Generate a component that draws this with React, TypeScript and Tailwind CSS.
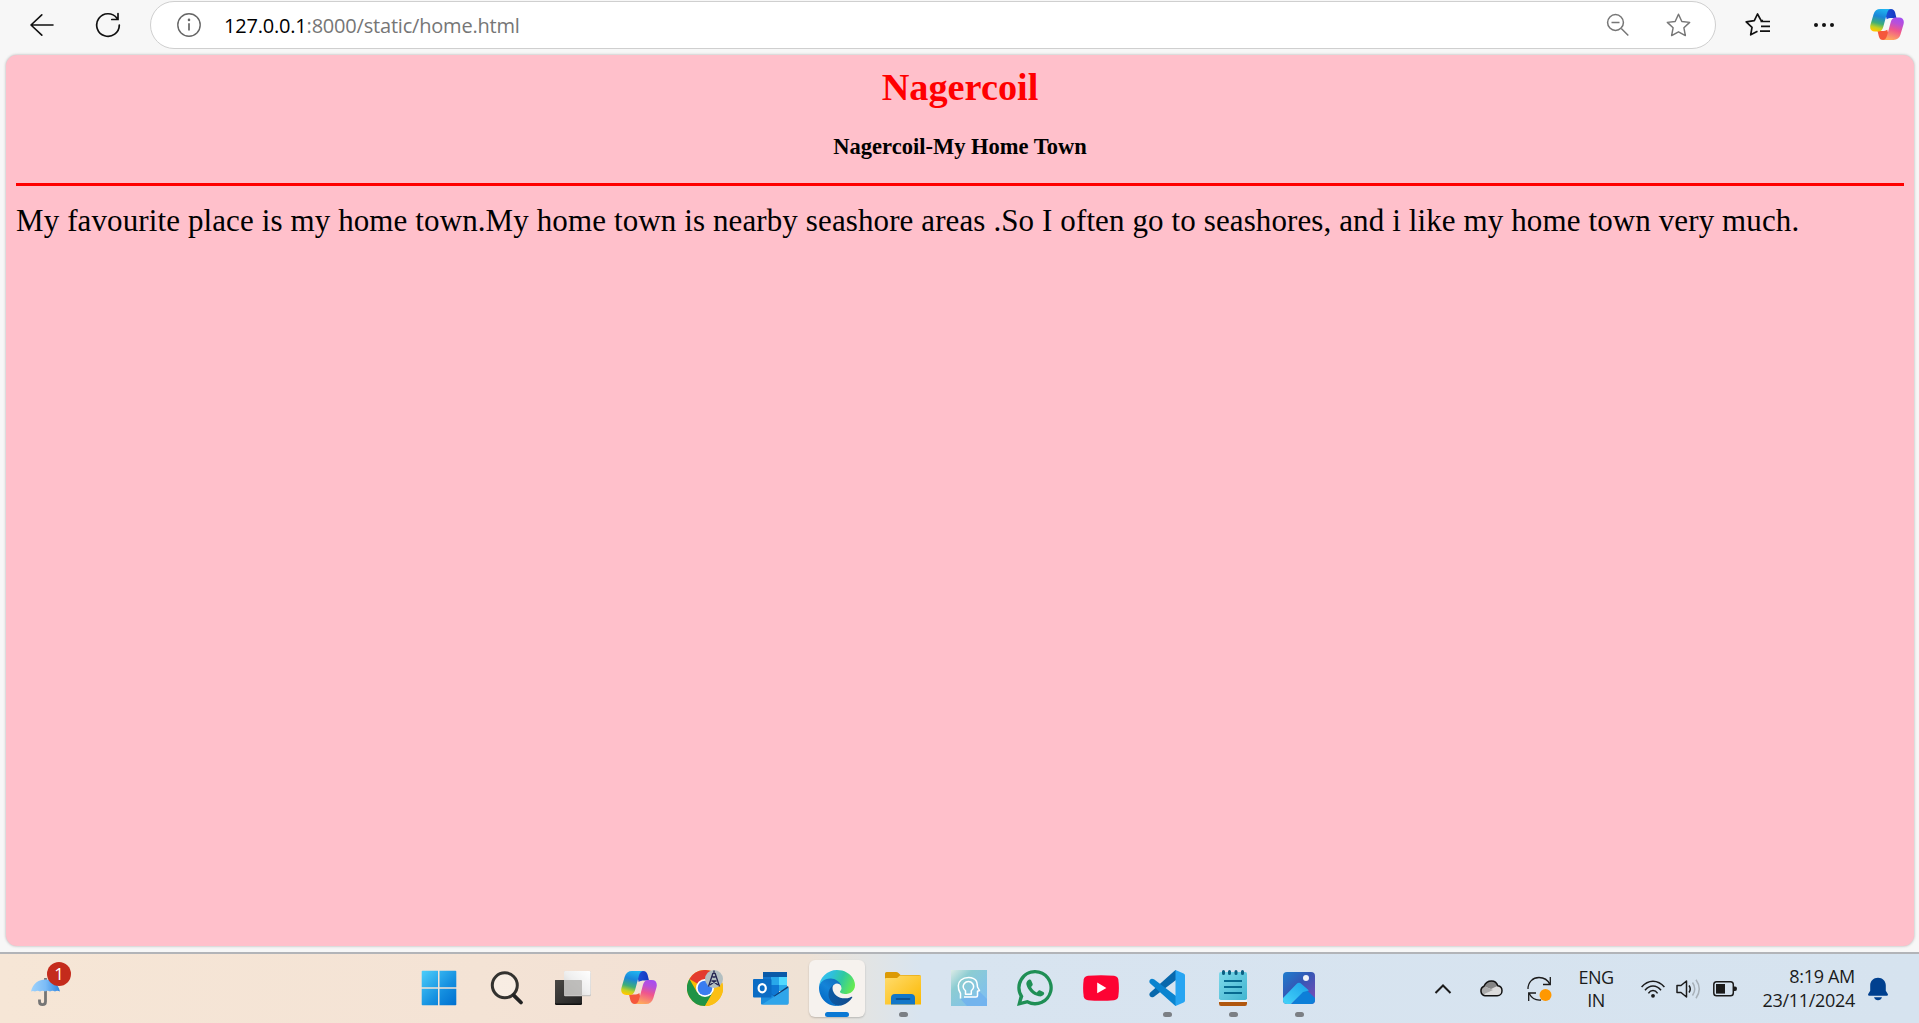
import { type ReactNode } from 'react';

function CopilotIcon({ id, className }: { id: string; className: string }) {
  const fold = 'M17.500 0h4.700c2.400 0 3.700 1.400 4.400 3.800L28 9.500h-4.500c-3 0-4.500.5-5.800 1.500L16.500 6z';
  const ribbon =
    'M11 0h12c-2.800 0-4.200 1.600-5 4.600l-4 14.600c-.9 3.200-2.500 4.800-5.400 4.800H5.200C1.200 24-.6 21 .5 16.800l3.200-11C4.900 1.900 7.300 0 11 0z';
  return (
    <svg viewBox="0 0 36 33" className={className} preserveAspectRatio="none">
      <defs>
        <linearGradient id={id + 'a'} x1=".6" y1="0" x2=".35" y2="1">
          <stop offset="0" stopColor="#1fb4f0" />
          <stop offset=".35" stopColor="#1a86d8" />
          <stop offset=".65" stopColor="#3fae78" />
          <stop offset=".85" stopColor="#c3d022" />
          <stop offset="1" stopColor="#ffc800" />
        </linearGradient>
        <linearGradient id={id + 'b'} x1=".3" y1="1" x2=".6" y2="0">
          <stop offset="0" stopColor="#a64df0" />
          <stop offset=".25" stopColor="#b950d8" />
          <stop offset=".55" stopColor="#f0568c" />
          <stop offset="1" stopColor="#ffa95c" />
        </linearGradient>
        <linearGradient id={id + 'c'} x1="0" y1="0" x2="1" y2="0">
          <stop offset="0" stopColor="#1e50d8" />
          <stop offset="1" stopColor="#1438c0" />
        </linearGradient>
      </defs>
      <path d={fold} fill={`url(#${id}c)`} />
      <path d={fold} fill="#f5573c" transform="rotate(180 18 16.500)" />
      <path d={ribbon} fill={`url(#${id}a)`} />
      <path d={ribbon} fill={`url(#${id}b)`} transform="rotate(180 18 16.500)" />
    </svg>
  );
}

function StartIcon() {
  return (
    <svg viewBox="0 0 36 36" className="size-9 -translate-x-[2px]">
      <defs>
        <linearGradient id="win" x1="0" y1="0" x2="35" y2="35" gradientUnits="userSpaceOnUse">
          <stop offset="0" stopColor="#4fd0fb" />
          <stop offset=".6" stopColor="#1590e0" />
          <stop offset="1" stopColor="#0070d0" />
        </linearGradient>
      </defs>
      <path
        fill="url(#win)"
        d="M1.500.700H17v16.500H.700V1.500q0-.8.8-.8zM18.500.700H34.500q.8 0 .8.800V17.200H18.500zM.7 18.700H17V35.300H1.500q-.8 0-.8-.8zM18.500 18.700H35.300V34.500q0 .8-.8.800H18.500z"
      />
    </svg>
  );
}

function SearchIcon() {
  return (
    <svg viewBox="0 0 36 36" className="size-9" fill="none" strokeLinecap="round">
      <circle cx="15.800" cy="15.300" r="12.500" fill="#fff" fillOpacity=".35" stroke="#33322f" strokeWidth="3" />
      <path d="M24.800 25.300 32 32.500" stroke="#222" strokeWidth="3.800" />
    </svg>
  );
}

function TaskViewIcon() {
  return (
    <svg viewBox="0 0 36 36" className="size-9">
      <defs>
        <linearGradient id="tvd" x1="0" y1="0" x2="1" y2="1">
          <stop offset="0" stopColor="#4a4845" />
          <stop offset="1" stopColor="#242424" />
        </linearGradient>
        <linearGradient id="tvl" x1="0" y1="1" x2="1" y2="0">
          <stop offset="0" stopColor="#cfcdcb" />
          <stop offset=".5" stopColor="#efefef" />
          <stop offset="1" stopColor="#fff" />
        </linearGradient>
      </defs>
      <rect x="0" y="10" width="27" height="25" rx="1.300" fill="#111" />
      <rect x="0" y="10" width="27" height="23.500" rx="1.300" fill="url(#tvd)" />
      <rect x="9" y="1.200" width="27" height="25" rx="1.300" fill="#c8c6c4" />
      <rect x="9" y="1" width="26.500" height="24" rx="1.300" fill="url(#tvl)" />
      <path d="M9 10h17q1 0 1 1v14H9z" fill="#b5b4b2" opacity=".85" />
    </svg>
  );
}

function ChromeIcon() {
  return (
    <svg viewBox="0 0 36 36" className="size-9">
      <circle cx="18" cy="18" r="18" fill="#fbbc04" />
      <path d="M18 18 2.400 9A18 18 0 0 1 33.600 9z" fill="#e33b2e" />
      <path d="M2.400 9A18 18 0 0 0 18 36l7.800-13.500L18 18 10.200 22.500z" fill="#1f9346" />
      <path d="M18 9H33.600A18 18 0 0 1 18 36l7.800-13.500z" fill="#fbbf14" />
      <circle cx="18" cy="18" r="9" fill="#fff" />
      <circle cx="18" cy="18" r="7.300" fill="#3b7df0" />
      <circle cx="27" cy="9" r="9" fill="#b3bfc1" />
      <path
        d="M26 3 21.500 16.500M28 3l4.500 13.500M27 .5V4M25.500 7h3M24.500 11h5M23 15l5.500-4M31 15l-5.500-4"
        stroke="#252451"
        strokeWidth="1.300"
        fill="none"
      />
    </svg>
  );
}

function OutlookIcon() {
  return (
    <svg viewBox="0 0 36 36" className="size-9">
      <path d="M10 2h24v6H10z" fill="#0a5aa8" />
      <path d="M10 7h8v9h-8z" fill="#1275cc" />
      <path d="M18 7h8v8h-8z" fill="#28a8ea" />
      <path d="M26 7h8v8h-8z" fill="#50d9ff" />
      <path d="M10 15h8v11h-8z" fill="#0a4c94" />
      <path d="M18 15h8v11h-8z" fill="#0f78d4" />
      <path d="M26 15h8v6h-8z" fill="#28a8ea" />
      <path d="M8 34V22l13 4 14.500-8.500V33q0 1.500-1.500 1.500H9.500Q8 34.500 8 34z" fill="#1a8cdc" />
      <path d="M35.500 17.500 9 34.500H34q1.500 0 1.500-1.500z" fill="#2fa5ea" />
      <path d="M16 22 21 25.800 35 16l.5 1.500L21.500 26.500z" fill="#123b70" />
      <rect x="0" y="9" width="18.500" height="18.500" rx="1" fill="#0b6cc4" />
      <ellipse cx="9.200" cy="18.200" rx="3.600" ry="4.100" fill="none" stroke="#fff" strokeWidth="2.200" />
    </svg>
  );
}

function EdgeIcon() {
  return (
    <svg viewBox="0 0 256 256" className="size-9">
      <defs>
        <linearGradient id="e1" x1=".1" x2="1" y1=".6" y2=".7">
          <stop offset="0" stopColor="#0c59a4" />
          <stop offset="1" stopColor="#114a8b" />
        </linearGradient>
        <linearGradient id="e2" x1=".8" x2=".3" y1=".2" y2="1">
          <stop offset="0" stopColor="#1273c4" />
          <stop offset=".4" stopColor="#1484d8" />
          <stop offset="1" stopColor="#0067c4" />
        </linearGradient>
        <linearGradient id="e3" x1="0" x2="1" y1=".3" y2=".6">
          <stop offset="0" stopColor="#35c1f1" />
          <stop offset=".3" stopColor="#2fc0dc" />
          <stop offset=".6" stopColor="#2fc9a0" />
          <stop offset="1" stopColor="#66eb4e" />
        </linearGradient>
      </defs>
      <path
        fill="url(#e1)"
        d="M231 190.500c-3.400 1.800-6.900 3.400-10.500 4.700a101.500 101.500 0 0 1-35.900 6.500c-47.300 0-88.500-32.500-88.500-74.300.1-11.400 6.400-21.900 16.400-27.300-42.800 1.800-53.800 46.400-53.800 72.500 0 73.900 68.100 81.400 82.800 81.400 7.900 0 19.800-2.300 27-4.600l1.300-.4c27.600-9.500 51-28.100 66.600-52.800 1.200-1.900.6-4.300-1.200-5.500-1.300-.8-2.900-.9-4.200-.2z"
      />
      <path
        fill="url(#e2)"
        d="M105.700 241.400c-8.900-5.500-16.600-12.800-22.700-21.300-26.300-36-18.400-86.500 17.600-112.800 3.800-2.700 7.700-5.200 11.900-7.200 3.100-1.500 8.400-4.100 15.500-4 10.100.1 19.600 4.900 25.700 13 4 5.400 6.300 11.900 6.400 18.700 0-.2 24.500-79.600-80-79.600-43.900 0-80 41.700-80 78.200-.2 19.300 4 38.500 12.100 56 27.600 58.800 94.800 87.600 156.400 67.100-21.100 6.600-44.100 3.700-62.900-8.100z"
      />
      <path
        fill="url(#e3)"
        d="M152.300 148.900c-.8 1-3.300 2.500-3.300 5.700 0 2.600 1.700 5.100 4.700 7.200 14.400 10 41.500 8.700 41.600 8.700 10.700 0 21.100-2.900 30.300-8.300 18.800-11 30.400-31.100 30.400-52.900.3-22.400-8-37.300-11.300-43.900C223.500 23.900 177.700 0 128 0 58 0 1 56.200 0 126.200c.5-36.500 36.800-66 80-66 3.500 0 23.500.3 42 10.100 16.300 8.600 24.900 18.900 30.800 29.200 6.200 10.700 7.300 24.100 7.300 29.500 0 5.300-2.700 13.300-7.800 19.900z"
      />
    </svg>
  );
}

function ExplorerIcon() {
  return (
    <svg viewBox="0 0 36 36" className="size-9">
      <defs>
        <linearGradient id="fold" x1="0" y1="0" x2="1" y2="1">
          <stop offset="0" stopColor="#ffdc6e" />
          <stop offset="1" stopColor="#fcb800" />
        </linearGradient>
      </defs>
      <path d="M0 3.500Q0 2 1.500 2H11q1.500 0 2.500 1l2 2H34q2 0 2 2v6H0z" fill="#dc9a06" />
      <path d="M0 9q0-1 1-1h11l3-2.500H35q1 0 1 1v28H0z" fill="url(#fold)" />
      <path d="M6 34.500V28q0-4 4-4h16q4 0 4 4v6.500z" fill="#1377c8" />
      <path d="M11.500 29h13" stroke="#0a4884" strokeWidth="1.600" strokeLinecap="round" />
    </svg>
  );
}

function HeadIcon() {
  return (
    <svg viewBox="0 0 36 36" className="size-9" fill="none">
      <defs>
        <linearGradient id="head" x1="0" y1="0" x2="1" y2="1">
          <stop offset="0" stopColor="#dcebe6" />
          <stop offset=".3" stopColor="#8cccd2" />
          <stop offset="1" stopColor="#7dbdf5" />
        </linearGradient>
      </defs>
      <path d="M0 0h36v36H0z" fill="url(#head)" />
      <path d="M9.500 29 27 26l1-5 8 8v7H16z" fill="#6fb0ee" opacity=".8" />
      <g stroke="#fff" strokeWidth="1.500" strokeLinejoin="round">
        <path d="M9.500 28.500v-5C6 18 7 12.500 10 10 14 6.500 22 6.500 25 10.500c1.500 2 1.200 4.500 1.500 6.500l2 3.500-2 .8v4.500q0 1.200-1.500 1.200H13" />
        <path d="M14.500 24.300v-3.500c-2.700-2.300-2.700-5.300-1.200-7.300 2-2.600 6.300-2.600 8.200 0 1.500 2 1.500 5-1.200 7.300v3.500z" />
      </g>
    </svg>
  );
}

function WhatsAppIcon() {
  return (
    <svg viewBox="0 0 36 36" className="size-9">
      <path
        fill="#1f8f55"
        fillRule="evenodd"
        d="M18.200 0a17.700 17.700 0 1 1-8.100 33.500L0 36l2.500-9.700A17.700 17.700 0 0 1 18.200 0zm.1 3.300A14.400 14.400 0 0 0 6 25.500l.4.700L4.600 31.400l5.800-1.500.7.400A14.400 14.400 0 1 0 18.300 3.300z"
      />
      <path
        fill="#1f8f55"
        d="M11.500 10c.9-.6 2.200-.6 2.700.5l1.400 3.200c.3.800 0 1.500-.5 2.100l-1 1.200c1.300 2.500 3.200 4.300 5.700 5.400l1.500-1.600c.6-.6 1.300-.7 2-.3l3 1.600c1.100.6 1.100 1.600.5 2.500-1 1.500-2.800 2.100-5.100 1.700-6.200-1.300-11-6-12.300-11.700-.4-2 .5-3.600 2.100-4.600z"
      />
    </svg>
  );
}

function YouTubeIcon() {
  return (
    <svg viewBox="0 0 36 36" className="size-9">
      <path
        fill="#fd0333"
        d="M5 5.800Q18 4.600 31 5.800 34.700 6.200 35.300 9.500 36.500 18 35.300 26.500 34.700 29.800 31 30.200 18 31.400 5 30.200 1.300 29.800.7 26.500-.5 18 .7 9.500 1.300 6.200 5 5.800z"
      />
      <path fill="#fff" d="M14.200 12.500v10.800l9.200-5.400z" />
    </svg>
  );
}

function VsCodeIcon() {
  return (
    <svg viewBox="0 0 36 36" className="size-9">
      <path d="M1 26.200Q-.3 24.500 1 22.700L25 1.200Q26.500 0 27 0V10L5 26.700Q2.500 28.200 1 26.200z" fill="#0868ac" />
      <path d="M1 9.800Q-.3 11.500 1 13.300L25 34.800Q26.500 36 27 36V26L5 9.300Q2.500 7.800 1 9.800z" fill="#0b84cf" />
      <path d="M26.500 0 34.600 3.500Q36 4.200 36 5.500v25q0 1.400-1.400 2L26.500 36z" fill="#27a5f2" />
    </svg>
  );
}

function NotepadIcon() {
  return (
    <svg viewBox="0 0 36 36" className="size-9">
      <defs>
        <linearGradient id="np" x1="0" y1="0" x2="1" y2="1">
          <stop offset="0" stopColor="#7ed9ea" />
          <stop offset="1" stopColor="#41b5d0" />
        </linearGradient>
      </defs>
      <path d="M4 28h28v5.500Q32 36 30 36H6q-2 0-2-2.500z" fill="#b0570e" />
      <path d="M4 28h28v4H4z" fill="#eef2f4" />
      <rect x="4" y="2" width="28" height="28" rx="1.800" fill="url(#np)" />
      <path d="M9 11h18M9 17h18M9 23h18" stroke="#076a90" strokeWidth="1.900" />
      <path d="M8.500 1.500v2M14.500 1.500v2M21 1.500v2M27.500 1.500v2" stroke="#0b5f82" strokeWidth="3" strokeLinecap="round" />
    </svg>
  );
}

function PhotosIcon() {
  return (
    <svg viewBox="0 0 36 36" className="size-9">
      <defs>
        <linearGradient id="ph" x1="0" y1="0" x2="1" y2="1">
          <stop offset="0" stopColor="#1b83d2" />
          <stop offset=".45" stopColor="#3457b5" />
          <stop offset="1" stopColor="#8e49b8" />
        </linearGradient>
        <linearGradient id="phm" x1="0" y1="1" x2="1" y2="0">
          <stop offset="0" stopColor="#49d8fb" />
          <stop offset="1" stopColor="#1aa0e8" />
        </linearGradient>
        <clipPath id="phc">
          <rect x="2" y="2" width="32" height="32" rx="4" />
        </clipPath>
      </defs>
      <g clipPath="url(#phc)">
        <path d="M0 0h36v36H0z" fill="url(#ph)" />
        <path d="M9 36 24 18.500l12 11.500v6z" fill="#0d7fd8" />
        <path d="M0 30 15.500 14q2.500-2.300 5 0L28 20.500 22 22 8 36H0z" fill="url(#phm)" />
        <circle cx="25" cy="8" r="3" fill="#f1f3f8" />
      </g>
    </svg>
  );
}

function TaskButton({ children, running, active }: { children: ReactNode; running?: boolean; active?: boolean }) {
  return (
    <div className="flex w-[66px] justify-center">
      <div
        className={
          active
            ? 'flex h-[57px] w-14 flex-col items-center rounded-md bg-[#f6f2ee] pt-[10px] shadow-[0_1px_2px_rgba(0,0,0,0.2)]'
            : 'flex h-[57px] w-14 flex-col items-center pt-[10px]'
        }
      >
        {children}
        {active && <div className="mt-[6px] h-[5px] w-6 rounded-full bg-[#0a78d4]" />}
        {running && <div className="mt-[6px] h-[5px] w-[9px] rounded-full bg-[#7b7f84]" />}
      </div>
    </div>
  );
}

const STAR = 'M12 1.200l3.200 6.900 7.500.9-5.500 5.200 1.400 7.500L12 18.100l-6.600 3.600 1.400-7.500L1.300 9l7.500-.9z';

function Toolbar() {
  return (
    <header className="flex h-[54px] shrink-0 items-start bg-[#f7f7f7]">
      <div className="flex h-[49px] w-[150px] items-center">
        <svg viewBox="0 0 24 24" className="ml-[30px] size-6" fill="none" stroke="#111" strokeWidth="1.600" strokeLinecap="round" strokeLinejoin="round">
          <path d="M23 12H1M11.800 1.800 1 12l10.800 10.200" />
        </svg>
        <svg viewBox="0 0 26 26" className="ml-[41px] size-[26px]" fill="none" stroke="#111" strokeWidth="1.700" strokeLinecap="round">
          <path d="M24.300 13A11.300 11.300 0 1 1 22 6.200M23 1.500v6h-6.200" />
        </svg>
      </div>
      <div className="mt-px flex h-12 w-[1566px] items-center rounded-full border border-[#cfcfcf] bg-white">
        <svg viewBox="0 0 24 24" className="ml-[26px] size-6" fill="none" stroke="#666" strokeWidth="1.400">
          <circle cx="12" cy="12" r="11.200" />
          <path d="M12 10.200v7.300" strokeWidth="1.700" />
          <circle cx="12" cy="6.900" r=".6" fill="#666" />
        </svg>
        <span className="ml-[23px] mt-px whitespace-nowrap font-['Open_Sans',sans-serif] text-[20px] leading-none tracking-[-0.2px] text-[#767676]">
          <span className="text-black">127.0.0.1</span>:8000/static/home.html
        </span>
        <svg viewBox="0 0 24 24" className="ml-auto size-6" fill="none" stroke="#767676" strokeWidth="1.500">
          <circle cx="9.500" cy="9.500" r="7.900" />
          <path d="m15.300 15.500 7 7M5.500 9.500h8" />
        </svg>
        <svg viewBox="0 0 24 24" className="ml-9 mr-6 size-[25px]" fill="none" stroke="#767676" strokeWidth="1.400" strokeLinejoin="round">
          <path d={STAR} />
        </svg>
      </div>
      <div className="flex h-[49px] items-center">
        <svg viewBox="0 0 25 24" className="ml-[29px] h-6 w-[25px]" fill="none" stroke="#111" strokeWidth="1.700" strokeLinejoin="round">
          <path d="M18 7.700 16 7.400 12.500 1 9.300 7.700 1.200 8.800 7 14.300 5.700 21.800 12.500 18.300M15.500 8.500H25M16 13.300h9M15 18.200h10" />
        </svg>
        <svg viewBox="0 0 22 6" className="ml-[43px] h-[6px] w-[22px]" fill="#111">
          <circle cx="3" cy="3" r="2" />
          <circle cx="11" cy="3" r="2" />
          <circle cx="19" cy="3" r="2" />
        </svg>
        <CopilotIcon id="cpt" className="ml-[35px] h-[31px] w-[34px]" />
      </div>
    </header>
  );
}

function Taskbar() {
  return (
    <footer className="flex h-[71px] shrink-0 border-t-2 border-[#b2b4b8] bg-[linear-gradient(90deg,#f6e6d6_0%,#f4e3d5_25%,#f2e1d5_36%,#efe2d5_42%,#e3e4e3_45%,#d8e4f0_48%,#d6e3ef_100%)]">
      <div className="w-[408px]">
        <div className="relative ml-[30px] mt-6 h-8 w-8">
          <svg viewBox="0 0 32 30" className="h-[30px] w-8">
            <defs>
              <linearGradient id="um" x1="0" y1="0" x2="1" y2="0">
                <stop offset="0" stopColor="#9fd2fb" />
                <stop offset=".5" stopColor="#7cbcf7" />
                <stop offset="1" stopColor="#2e86e0" />
              </linearGradient>
            </defs>
            <path d="M15.500 0v23.500q0 3.200-3 3.200t-3-3.200v-2" fill="none" stroke="#757575" strokeWidth="2.800" />
            <path d="M1 13.500C3 5 9 1.500 15.500 1.500S28 5 30 13.500q-3-1.500-5 0-2.500-1.500-5 0-2.500-1.500-5 0-2.500-1.500-5 0-2.500-1.500-5 0-2-1-4 0z" fill="url(#um)" />
          </svg>
          <span className="absolute -top-[16px] left-[17px] flex size-6 items-center justify-center rounded-full bg-[#c42b1c] font-['Open_Sans',sans-serif] text-[17px] text-white">
            1
          </span>
        </div>
      </div>
      <nav className="flex pt-[6px]">
        <TaskButton><StartIcon /></TaskButton>
        <TaskButton><SearchIcon /></TaskButton>
        <TaskButton><TaskViewIcon /></TaskButton>
        <TaskButton><CopilotIcon id="cpb" className="mt-px h-[33px] w-9" /></TaskButton>
        <TaskButton><ChromeIcon /></TaskButton>
        <TaskButton><OutlookIcon /></TaskButton>
        <TaskButton active><EdgeIcon /></TaskButton>
        <TaskButton running><ExplorerIcon /></TaskButton>
        <TaskButton><HeadIcon /></TaskButton>
        <TaskButton><WhatsAppIcon /></TaskButton>
        <TaskButton><YouTubeIcon /></TaskButton>
        <TaskButton running><VsCodeIcon /></TaskButton>
        <TaskButton running><NotepadIcon /></TaskButton>
        <TaskButton running><PhotosIcon /></TaskButton>
      </nav>
      <div className="ml-auto flex items-center font-['Open_Sans',sans-serif] text-[18px] leading-6 text-[#1b1b1b]">
        <svg viewBox="0 0 18 10" className="h-[10px] w-[18px]" fill="none" stroke="#1b1b1b" strokeWidth="2">
          <path d="m1.500 9 7.500-7.500L16.500 9" />
        </svg>
        <svg viewBox="0 0 24 17" className="ml-[27px] h-[17px] w-6">
          <path d="M6 15.800a5 5 0 0 1-1-9.500C6.500 2.500 9.500 1 12.500 1c3 0 5.300 1.800 6.300 4.800 3 .4 4.200 2.600 4.200 4.900 0 2.800-2 5.100-4.800 5.100z" fill="#dcdcdc" />
          <path d="M5 6.300C6.500 2.500 9.500 1 12.500 1c3 0 5.300 1.800 6.300 4.800L12 9z" fill="#858585" />
          <path d="M5 6.300 14 10 3 15Q-.5 9 5 6.300z" fill="#aaa" />
          <path d="M6 15.800a5 5 0 0 1-1-9.500C6.500 2.500 9.500 1 12.500 1c3 0 5.300 1.800 6.300 4.800 3 .4 4.200 2.600 4.200 4.900 0 2.800-2 5.100-4.800 5.100z" fill="none" stroke="#111" strokeWidth="1.500" />
        </svg>
        <svg viewBox="0 0 25 25" className="ml-6 size-[25px]" fill="none" stroke="#1b1b1b" strokeWidth="1.300">
          <path d="M1 13C1 6 6 1.500 12 1.500c5 0 9 2.800 11 7M23.300 1v7.500H16M14 24C9 24.500 4.500 22 2.200 17.500M1.700 25v-8H9" />
          <circle cx="18.500" cy="19" r="6" fill="#ff9800" stroke="none" />
        </svg>
        <div className="ml-[25px] w-[37px] whitespace-nowrap text-center leading-[23px] tracking-[-0.5px]">
          <div>ENG</div>
          <div>IN</div>
        </div>
        <svg viewBox="0 0 24 18" className="ml-[27px] h-[18px] w-6" fill="none" stroke="#1b1b1b" strokeWidth="1.500">
          <path d="M.6 7Q5.500 1.200 12 1.200T23.400 7M4 10.200q3.400-4.300 8-4.300t8 4.300M7.400 13.400Q9.300 10.600 12 10.600t4.600 2.800" />
          <circle cx="12" cy="15.800" r="1.900" fill="#1b1b1b" stroke="none" />
        </svg>
        <svg viewBox="0 0 25 20" className="ml-[11px] h-5 w-[25px]" fill="none" stroke="#1b1b1b" strokeWidth="1.500" strokeLinejoin="round">
          <path d="M1 6.500h4L10.500 2v16L5 13.500H1zM13 6.500q2.500 3.500 0 7" />
          <path d="M16.500 3.500q4.500 6.500 0 13M20 .8q6.500 9.200 0 18.400" stroke="#a7b0b8" />
        </svg>
        <svg viewBox="0 0 24 16" className="ml-3 h-4 w-6">
          <rect x=".8" y=".8" width="19.500" height="14" rx="2.800" fill="none" stroke="#1b1b1b" strokeWidth="1.500" />
          <rect x="3" y="3" width="9" height="9.600" fill="#1b1b1b" />
          <path d="M20.500 5.500H22q2 0 2 2.300t-2 2.300h-1.500z" fill="#1b1b1b" />
        </svg>
        <div className="-mt-[2px] ml-[25px] text-right tracking-[-0.300px]">
          <div>8:19 AM</div>
          <div>23/11/2024</div>
        </div>
        <svg viewBox="0 0 20 24" className="ml-[13px] mr-[31px] h-6 w-5" fill="#00408f">
          <path d="M10 .8c4.500 0 7.800 3.300 7.800 7.700v5.300l2 3.200q.5 1.500-1 1.800H1.200q-1.500-.3-1-1.800l2-3.200V8.500C2.200 4.100 5.500.8 10 .8zM6 20.300h8q-1 3-4 3t-4-3z" />
        </svg>
      </div>
    </footer>
  );
}

export default function App() {
  return (
    <div className="flex h-[1023px] w-[1919px] flex-col overflow-hidden bg-[#f7f7f7]">
      <Toolbar />
      <main className="mb-[6px] ml-[6px] mr-[5px] mt-px min-h-0 flex-1 rounded-[11px] bg-[#ffc0cb] px-[10px] font-['Liberation_Serif',serif] text-black shadow-[0_0_3px_rgba(0,0,0,0.3)]">
        <h1 className="pt-[9px] text-center text-[38.300px] font-bold leading-[46px] text-[#ff0000]">Nagercoil</h1>
        <h3 className="mt-[23px] text-center text-[22.500px] font-bold leading-7">Nagercoil-My Home Town</h3>
        <hr className="mt-[22px] h-[3px] border-0 bg-[#ff0000]" />
        <p className="mt-[17px] whitespace-nowrap text-[31px] leading-9 tracking-[0.110px]">
          My favourite place is my home town.My home town is nearby seashore areas .So I often go to seashores, and i like my home town very much.
        </p>
      </main>
      <Taskbar />
    </div>
  );
}
